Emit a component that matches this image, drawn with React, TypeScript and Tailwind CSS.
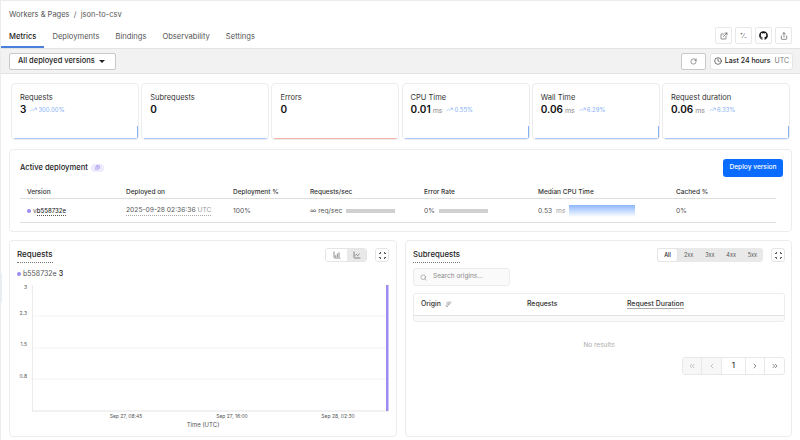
import { ChartLine, ChartColumnIncreasing, ChevronLeft, ChevronRight, ChevronsLeft, ChevronsRight, Clock, ExternalLink, RotateCw, Search, Share, TrendingUp, ArrowDownWideNarrow, Images } from 'lucide-react';
import { FaGithub } from 'react-icons/fa';

const tabs = ['Metrics', 'Deployments', 'Bindings', 'Observability', 'Settings'];

const metrics = [
  { label: 'Requests', value: '3', delta: '300.00%', tail: true, line: 'bg-[#a9c8fb]' },
  { label: 'Subrequests', value: '0', line: 'bg-[#a9c8fb]' },
  { label: 'Errors', value: '0', line: 'bg-[#f3b4a8]' },
  { label: 'CPU Time', value: '0.01', unit: 'ms', delta: '0.55%', tail: true, line: 'bg-[#a9c8fb]' },
  { label: 'Wall Time', value: '0.06', unit: 'ms', delta: '6.29%', tail: true, line: 'bg-[#a9c8fb]' },
  { label: 'Request duration', value: '0.06', unit: 'ms', delta: '6.33%', tail: true, line: 'bg-[#a9c8fb]' },
];

function IconButton({ children }: { children: React.ReactNode }) {
  return (
    <div className="w-[17px] h-[17px] flex items-center justify-center border border-[#e8e8e8] rounded-[2px] bg-white text-[#555]">
      {children}
    </div>
  );
}

function CornersIcon() {
  return (
    <svg width="9" height="9" viewBox="0 0 9 9" fill="none" stroke="#444" strokeWidth="0.9">
      <path d="M2.5 1V2.5H1M6.5 1V2.5H8M2.5 8V6.5H1M6.5 8V6.5H8" />
    </svg>
  );
}

function MetricCard({ m }: { m: (typeof metrics)[number] }) {
  return (
    <div className="relative w-[128px] h-[57px] border border-[#ececec] rounded-[4px] bg-white px-[8px] pt-[9px] overflow-hidden">
      <div className="text-[7.5px] leading-[10px] text-[#333]">{m.label}</div>
      <div className="flex items-baseline -mt-[1px] leading-[14px]">
        <span className="text-[10px] font-semibold text-[#111]">{m.value}</span>
        {m.unit && <span className="text-[7px] text-[#888] ml-[2px]">{m.unit}</span>}
        {m.delta && (
          <span className="flex items-center text-[6px] text-[#86b0f5] ml-[4px] gap-[1px]">
            <TrendingUp size={7} />
            {m.delta}
          </span>
        )}
      </div>
      <div className={`absolute left-[2px] right-0 bottom-0 h-[1px] ${m.line}`} />
      {m.tail && <div className="absolute right-0 bottom-0 w-[1px] h-[13px] bg-[#86b0f5]" />}
    </div>
  );
}

function Bar() {
  return <div className="w-[49px] h-[4px] bg-[#d0d0d0]" />;
}

function RequestsChart() {
  const labels = [
    { y: 290, text: '3' },
    { y: 316, text: '2.3' },
    { y: 347, text: '1.5' },
    { y: 379, text: '0.8' },
  ];
  return (
    <svg width="386" height="163" viewBox="10 279 386 163" className="block -mt-[1px]" fontFamily="Inter, sans-serif">
      {[317, 349, 380].map((y) => (
        <line key={y} x1="33" x2="387" y1={y} y2={y} stroke="#f3f3f3" />
      ))}
      <line x1="32.5" x2="32.5" y1="286" y2="412" stroke="#ececec" />
      <line x1="32" x2="388" y1="412" y2="412" stroke="#e4e4e4" />
      <rect x="386" y="286" width="2.5" height="126" fill="#9a8cf0" />
      {labels.map((l) => (
        <text key={l.text} x="27" y={l.y} textAnchor="end" fontSize="5" fill="#555">
          {l.text}
        </text>
      ))}
      <text x="126" y="419" textAnchor="middle" fontSize="5" fill="#555">Sep 27, 08:45</text>
      <text x="232" y="419" textAnchor="middle" fontSize="5" fill="#555">Sep 27, 16:00</text>
      <text x="338" y="419" textAnchor="middle" fontSize="5" fill="#555">Sep 28, 02:30</text>
      <text x="203" y="428" textAnchor="middle" fontSize="6" fill="#555">Time (UTC)</text>
    </svg>
  );
}

export default function App() {
  return (
    <div className="relative w-[800px] h-[440px] overflow-hidden bg-white font-['Inter',sans-serif] border-l border-t border-[#ececec] text-[#333]">
      {/* sliver of the sidebar's highlight at the crop edge */}
      <div className="absolute -left-[1px] top-[272px] w-[2px] h-[30px] bg-[#e6eefa]" />

      {/* Header */}
      <div className="h-[47px] flex flex-col">
        <div className="pl-[8px] pt-[8px] text-[7.5px] leading-[12px] text-[#555]">Workers &amp; Pages&nbsp; /&nbsp; json-to-csv</div>
        <div className="flex items-start justify-between mt-[7px]">
          <div className="flex gap-[16px] text-[7.6px] leading-[18px] text-[#555]">
            {tabs.map((t, i) => (
              <div key={t} className={i === 0 ? 'pl-[8px] pr-[8px] -mr-[8px] h-[20px] border-b-2 border-[#4a7fdc] text-[#222] font-medium' : 'h-[20px]'}>
                {t}
              </div>
            ))}
          </div>
          <div className="flex gap-[3px] pr-[8px] -mt-[1px]">
            <IconButton><ExternalLink size={8} /></IconButton>
            <IconButton><span className="text-[7px] leading-none">⁺∕₋</span></IconButton>
            <IconButton><FaGithub size={9} color="#111" /></IconButton>
            <IconButton><Share size={8} /></IconButton>
          </div>
        </div>
      </div>

      {/* Toolbar */}
      <div className="h-[26px] flex items-center justify-between bg-[#f2f2f2] border-y border-[#e3e3e3] pl-[8px] pr-[6px]">
        <div className="w-[107px] h-[17px] flex items-center justify-between px-[8px] bg-white border border-[#c9c9c9] rounded-[2px] text-[7.5px] font-medium text-[#222] whitespace-nowrap">
          All deployed versions
          <span className="w-0 h-0 border-x-[3px] border-x-transparent border-t-[3px] border-t-[#222] mr-[2px]" />
        </div>
        <div className="flex gap-[4px] mr-[1px]">
          <div className="w-[25px] h-[17px] flex items-center justify-center bg-white border border-[#c9c9c9] rounded-[2px] text-[#555]">
            <RotateCw size={7} />
          </div>
          <div className="w-[83px] h-[17px] flex items-center justify-center gap-[3px] bg-white border border-[#e5e5e5] rounded-[3px] text-[7px]">
            <Clock size={8} />
            <span className="font-medium text-[#222]">Last 24 hours</span>
            <span className="text-[#777] ml-[1px]">UTC</span>
          </div>
        </div>
      </div>

      {/* Metric cards */}
      <div className="flex gap-[2.2px] pl-[10px] mt-[9px]">
        {metrics.map((m) => (
          <MetricCard key={m.label} m={m} />
        ))}
      </div>

      {/* Active deployment */}
      <div className="relative ml-[8px] mt-[9px] w-[783px] h-[83px] border border-[#ececec] rounded-[4px] px-[10px]">
        <div className="flex items-center justify-between h-[27px] mt-[4px] -mr-[2px]">
          <div className="flex items-center gap-[3px] text-[7.6px] font-medium text-[#222] mt-[1px]">
            Active deployment
            <span className="w-[13px] h-[8px] flex items-center justify-center rounded-full bg-[#eeeafd] text-[#8a78ea]">
              <Images size={5} />
            </span>
          </div>
          <div className="w-[60px] h-[18px] flex items-center justify-center rounded-[3px] bg-[#0a6cff] text-white text-[6.6px] font-medium">
            Deploy version
          </div>
        </div>
        <div className="w-[756px] grid grid-cols-[99px_107px_77px_114px_114px_138px_100px] text-[6.5px] font-medium text-[#333] h-[16px] pt-[4px] items-center border-b border-[#dedede] pl-[7px] mt-[2px]">
          <div>Version</div>
          <div>Deployed on</div>
          <div>Deployment %</div>
          <div>Requests/sec</div>
          <div>Error Rate</div>
          <div>Median CPU Time</div>
          <div>Cached %</div>
        </div>
        <div className="w-[756px] grid grid-cols-[99px_107px_77px_114px_114px_138px_100px] text-[6.7px] text-[#555] h-[24px] pt-[1px] items-center border-b border-[#dedede] pl-[7px]">
          <div className="flex items-center">
            <span className="w-[3.5px] h-[3.5px] rounded-full bg-[#9a8cf0] mr-[2.5px]" />
            v<span className="text-[6px] text-[#222] font-medium border-b border-dotted border-[#555] leading-[9px]">b558732e</span>
          </div>
          <div className="border-b border-dotted border-[#aaa] w-fit leading-[9px]">
            2025-09-28 02:36:36 <span className="text-[#999]">UTC</span>
          </div>
          <div>100%</div>
          <div className="flex items-center gap-[4px]">∞ req/sec <Bar /></div>
          <div className="flex items-center gap-[4px]">0% <Bar /></div>
          <div className="flex items-center">
            0.53
            <span className="text-[#999] ml-[4px] mr-[4px]">ms</span>
            <div className="w-[66px] h-[12px] bg-gradient-to-b from-[#8db6fb] to-white" />
          </div>
          <div>0%</div>
        </div>
      </div>

      {/* Bottom panels */}
      <div className="flex gap-[8px] ml-[8px] mt-[8px]">
        <div className="relative w-[388px] h-[197px] border border-[#ececec] rounded-[4px] overflow-hidden">
          <div className="flex justify-between pl-[7px] pr-[7px] pt-[7px]">
            <div className="text-[8px] leading-[11px] font-medium text-[#222] border-b border-dotted border-[#777] h-[14px] mt-[1px]">Requests</div>
            <div className="flex gap-[8px]">
              <div className="w-[42px] h-[14px] flex rounded-[3px] border border-[#e5e5e5] overflow-hidden">
                <div className="w-[21px] flex items-center justify-center bg-white text-[#555]"><ChartColumnIncreasing size={8} /></div>
                <div className="flex-1 flex items-center justify-center bg-[#e9e9e9] text-[#555]"><ChartLine size={8} /></div>
              </div>
              <div className="w-[14px] h-[14px] flex items-center justify-center border border-[#e5e5e5] rounded-[3px]"><CornersIcon /></div>
            </div>
          </div>
          <div className="flex items-center pl-[7px] mt-[5px] text-[7px] leading-[11px] text-[#555]">
            <span className="w-[4px] h-[4px] rounded-full bg-[#9a8cf0] mr-[2px]" />
            b558732e <span className="text-[#222] ml-[2px] font-medium">3</span>
          </div>
          <RequestsChart />
        </div>

        <div className="w-[387px] h-[197px] border border-[#ececec] rounded-[4px] pl-[7px] pr-[6px]">
          <div className="flex justify-between pt-[7px]">
            <div className="text-[7.8px] leading-[11px] font-medium text-[#222] border-b border-dotted border-[#777] h-[14px] mt-[1px]">Subrequests</div>
            <div className="flex gap-[8px]">
              <div className="w-[106px] h-[14px] flex items-center rounded-[3px] bg-[#e9e9e9] text-[5.5px] text-[#555]">
                <div className="w-[21px] h-[14px] flex items-center justify-center bg-white rounded-[3px] border border-[#e5e5e5] text-[#222] font-medium">All</div>
                {['2xx', '3xx', '4xx', '5xx'].map((s) => (
                  <div key={s} className="flex-1 text-center">{s}</div>
                ))}
              </div>
              <div className="w-[14px] h-[14px] flex items-center justify-center border border-[#e5e5e5] rounded-[3px]"><CornersIcon /></div>
            </div>
          </div>
          <div className="w-[97px] h-[18px] mt-[5px] flex items-center gap-[6px] pl-[6px] bg-[#fafafa] border border-[#ececec] rounded-[3px] text-[6.5px] text-[#888]">
            <Search size={7} />
            Search origins...
          </div>
          <div className="w-[372px] h-[29px] mt-[7px] border border-[#ececec] rounded-[3px] bg-[#fafafa] overflow-hidden">
            <div className="h-[22px] flex items-center bg-white border-b border-[#e3e3e3] text-[6.9px] font-medium text-[#333] pl-[7px]">
              <div className="w-[106px] flex items-center gap-[4px]">Origin <ArrowDownWideNarrow size={7} color="#888" /></div>
              <div className="w-[100px]">Requests</div>
              <div className="border-b border-[#aaa] leading-[8px]">Request Duration</div>
            </div>
          </div>
          <div className="text-center text-[6.5px] text-[#aaa] mt-[18px] leading-[10px]">No results</div>
          <div className="flex justify-end mt-[7px]">
            <div className="w-[103px] h-[18px] flex border border-[#e8e8e8] rounded-[3px] text-[#aaa] overflow-hidden">
              <div className="w-[19px] flex items-center justify-center bg-[#f7f7f7] border-r border-[#e8e8e8]"><ChevronsLeft size={8} /></div>
              <div className="w-[20px] flex items-center justify-center bg-[#f7f7f7] border-r border-[#e8e8e8]"><ChevronLeft size={8} /></div>
              <div className="w-[24px] flex items-center justify-center border-r border-[#e8e8e8] text-[7px] font-medium text-[#222]">1</div>
              <div className="w-[19px] flex items-center justify-center border-r border-[#e8e8e8] text-[#555]"><ChevronRight size={8} /></div>
              <div className="flex-1 flex items-center justify-center text-[#555]"><ChevronsRight size={8} /></div>
            </div>
          </div>
        </div>
      </div>
    </div>
  );
}
